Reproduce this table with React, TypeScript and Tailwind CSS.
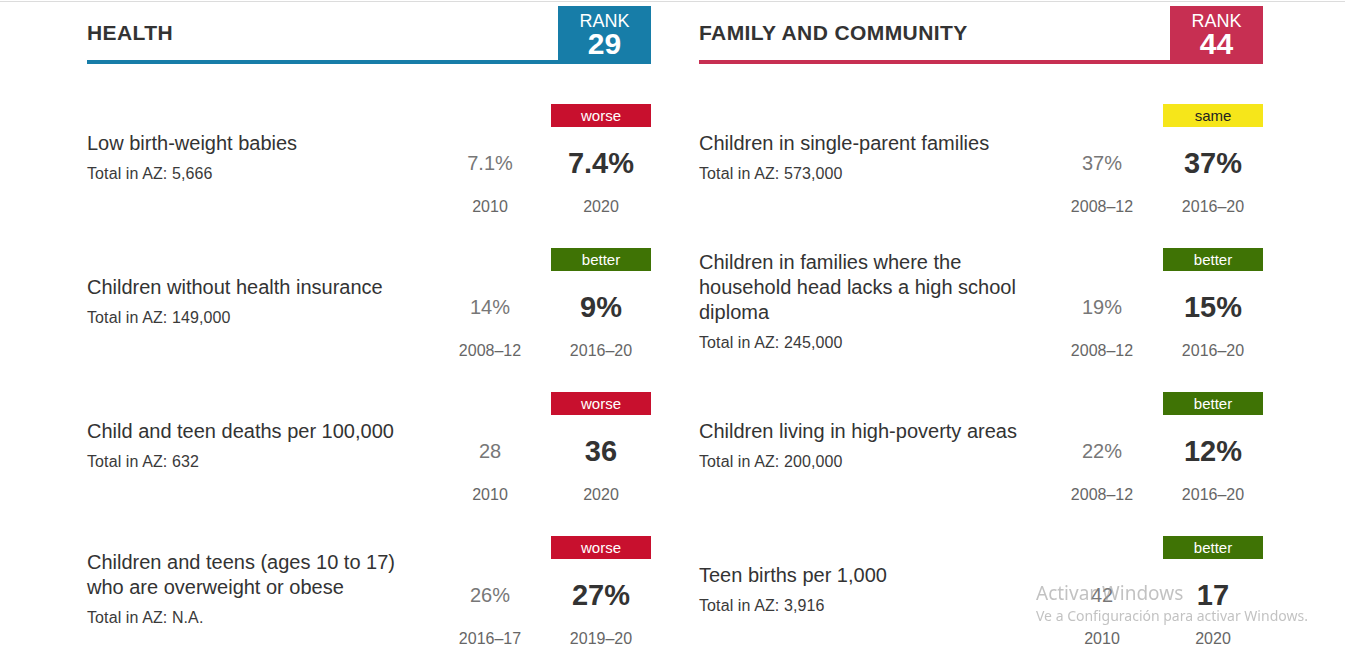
type Trend = 'worse' | 'better' | 'same'

interface Indicator {
  label: string
  total: string
  oldValue: string
  oldYear: string
  newValue: string
  newYear: string
  trend: Trend
}

interface Domain {
  title: string
  rank: number
  color: 'blue' | 'red'
  items: Indicator[]
}

const domains: Domain[] = [
  {
    title: 'HEALTH',
    rank: 29,
    color: 'blue',
    items: [
      { label: 'Low birth-weight babies', total: '5,666', oldValue: '7.1%', oldYear: '2010', newValue: '7.4%', newYear: '2020', trend: 'worse' },
      { label: 'Children without health insurance', total: '149,000', oldValue: '14%', oldYear: '2008–12', newValue: '9%', newYear: '2016–20', trend: 'better' },
      { label: 'Child and teen deaths per 100,000', total: '632', oldValue: '28', oldYear: '2010', newValue: '36', newYear: '2020', trend: 'worse' },
      { label: 'Children and teens (ages 10 to 17) who are overweight or obese', total: 'N.A.', oldValue: '26%', oldYear: '2016–17', newValue: '27%', newYear: '2019–20', trend: 'worse' },
    ],
  },
  {
    title: 'FAMILY AND COMMUNITY',
    rank: 44,
    color: 'red',
    items: [
      { label: 'Children in single-parent families', total: '573,000', oldValue: '37%', oldYear: '2008–12', newValue: '37%', newYear: '2016–20', trend: 'same' },
      { label: 'Children in families where the household head lacks a high school diploma', total: '245,000', oldValue: '19%', oldYear: '2008–12', newValue: '15%', newYear: '2016–20', trend: 'better' },
      { label: 'Children living in high-poverty areas', total: '200,000', oldValue: '22%', oldYear: '2008–12', newValue: '12%', newYear: '2016–20', trend: 'better' },
      { label: 'Teen births per 1,000', total: '3,916', oldValue: '42', oldYear: '2010', newValue: '17', newYear: '2020', trend: 'better' },
    ],
  },
]

const trendStyles: Record<Trend, string> = {
  worse: 'bg-[#c8102e] text-white',
  better: 'bg-[#3f7305] text-white',
  same: 'bg-[#f6e61a] text-[#222]',
}

function DomainHeader({ title, rank, color }: { title: string; rank: number; color: 'blue' | 'red' }) {
  const blue = color === 'blue'
  return (
    <div className={`flex h-[58px] border-b-4 ${blue ? 'border-[#177da8]' : 'border-[#c72f52]'}`}>
      <div className="flex flex-1 items-center pb-[2px]">
        <h2 className="text-[21px] font-bold leading-none tracking-[0.4px] text-[#333]">{title}</h2>
      </div>
      <div className={`flex w-[93px] flex-col items-center pt-[6px] text-white ${blue ? 'bg-[#177da8]' : 'bg-[#c72f52]'}`}>
        <span className="text-[18px] leading-[18px]">RANK</span>
        <span className="text-[30px] font-bold leading-[28px]">{rank}</span>
      </div>
    </div>
  )
}

function IndicatorRow({ item }: { item: Indicator }) {
  return (
    <div className="flex h-[112px] items-center">
      <div className="flex-1 pb-[6px]">
        <p className="max-w-[330px] text-[20px] leading-[25px] text-[#333]">{item.label}</p>
        <p className="mt-[8px] text-[16px] leading-[20px] tracking-[0.1px] text-[#3a3a3a]">Total in AZ: {item.total}</p>
      </div>
      <div className="flex w-[100px] flex-col items-center">
        <div className="h-[23px]" />
        <span className="mt-[18px] text-[20px] leading-[36px] text-[#777]">{item.oldValue}</span>
        <span className="mt-[16px] text-[16px] leading-[19px] text-[#666]">{item.oldYear}</span>
      </div>
      <div className="ml-[11px] flex w-[100px] flex-col items-center">
        <div className={`h-[23px] w-full text-center text-[15px] leading-[23px] ${trendStyles[item.trend]}`}>
          {item.trend}
        </div>
        <span className="mt-[18px] text-[29px] font-bold leading-[36px] text-[#333]">{item.newValue}</span>
        <span className="mt-[16px] text-[16px] leading-[19px] text-[#666]">{item.newYear}</span>
      </div>
    </div>
  )
}

export default function App() {
  return (
    <div className="min-h-[655px] bg-white pt-px font-['Liberation_Sans',Arial,sans-serif]">
      <div className="h-px bg-[#dcdcdc]" />
      <div className="ml-[87px] mt-[4px] grid w-[1176px] grid-cols-2 gap-x-[48px]">
        {domains.map(domain => (
          <section key={domain.title}>
            <DomainHeader title={domain.title} rank={domain.rank} color={domain.color} />
            <div className="mt-[40px] flex flex-col gap-[32px]">
              {domain.items.map(item => (
                <IndicatorRow key={item.label} item={item} />
              ))}
            </div>
          </section>
        ))}
      </div>

      <div className="pointer-events-none fixed left-[1036px] top-[580px] font-['Noto_Sans',sans-serif] text-[#9a9a9a]/60">
        <p className="text-[19px] leading-[26px]">Activar Windows</p>
        <p className="text-[14px] leading-[19px]">Ve a Configuración para activar Windows.</p>
      </div>
    </div>
  )
}
